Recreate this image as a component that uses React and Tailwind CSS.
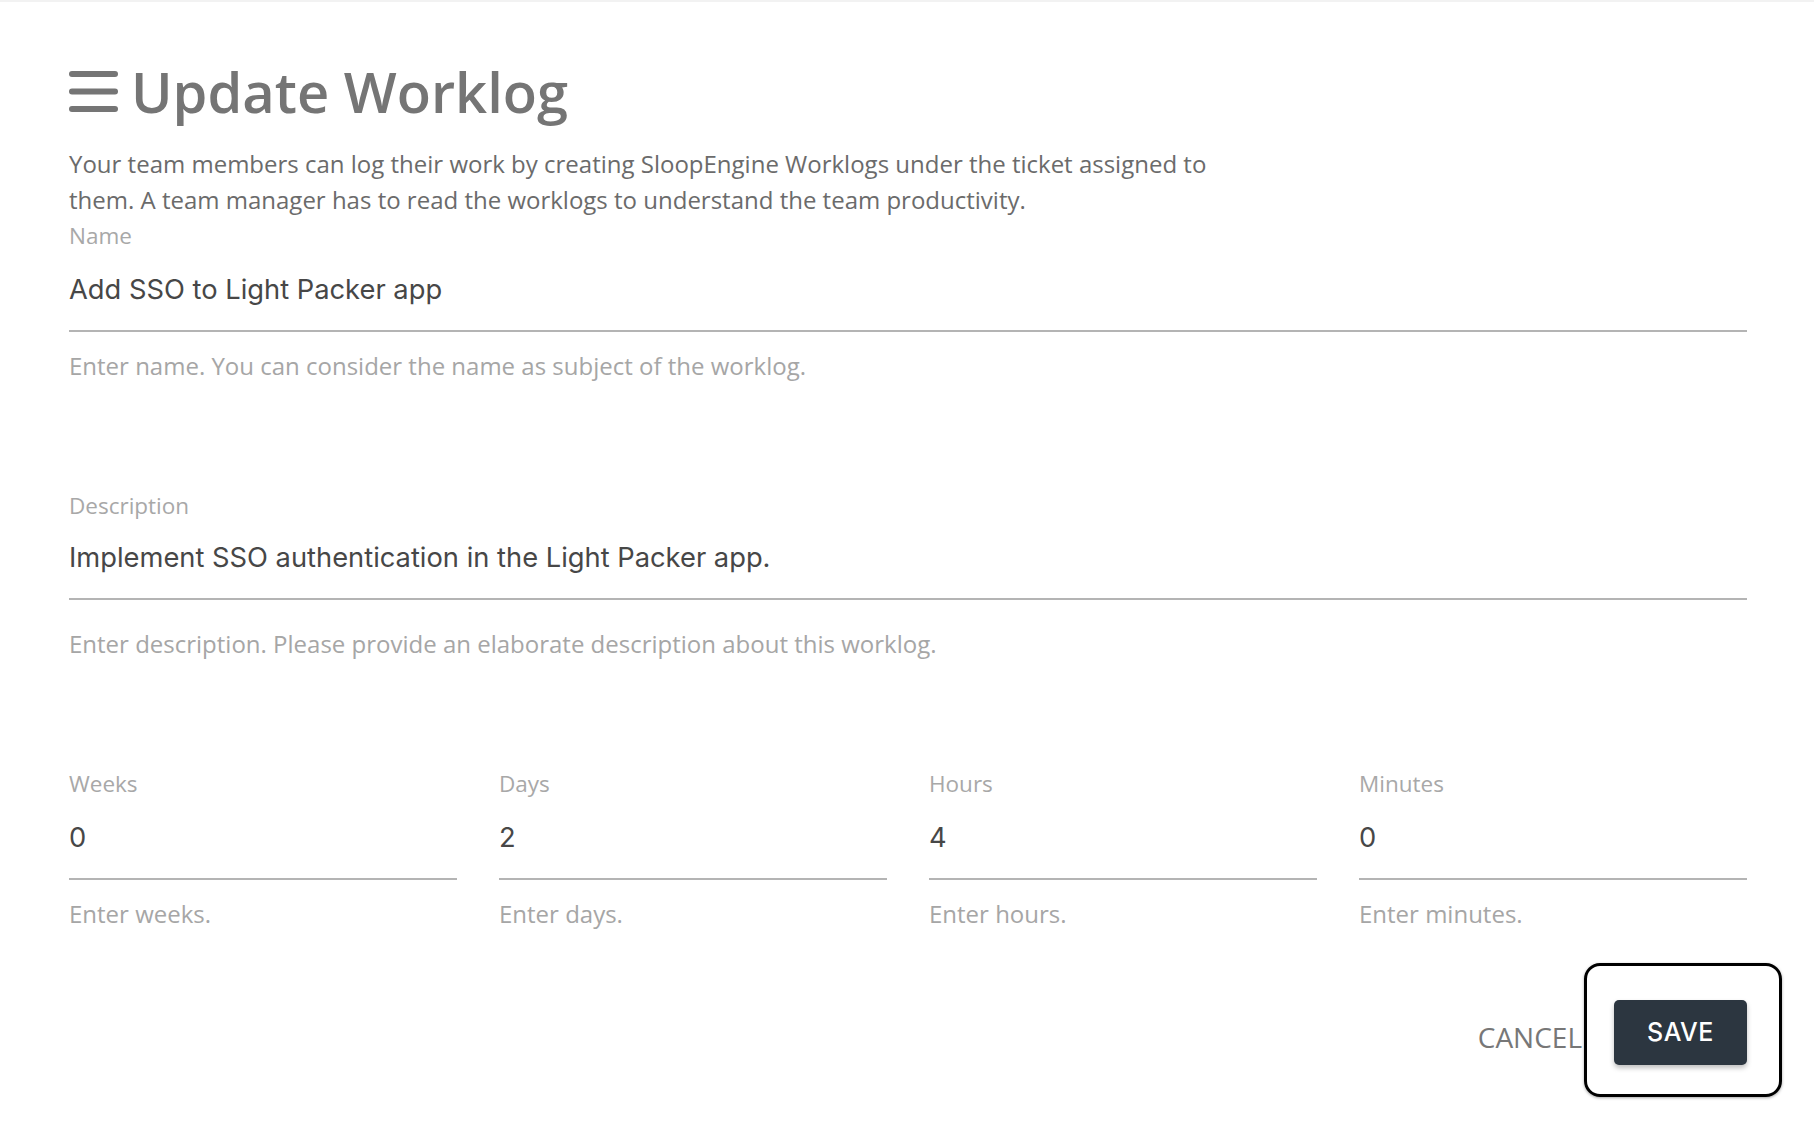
import React from "react";

const OPEN = { fontFamily: '"Open Sans", "Noto Sans", sans-serif' };
const SYS = { fontFamily: 'Inter, Roboto, "Liberation Sans", sans-serif' };

function Hamburger() {
  return (
    <svg width="49" height="41" viewBox="0 0 49 41" className="shrink-0">
      <rect x="0" y="0" width="49" height="6" rx="3" fill="#757575" />
      <rect x="0" y="17.5" width="49" height="6" rx="3" fill="#757575" />
      <rect x="0" y="35" width="49" height="6" rx="3" fill="#757575" />
    </svg>
  );
}

function Field({ label, value, helper, valueBox = "mt-[22px] pb-[21px]", helperMt = "mt-[19px]", className = "" }) {
  return (
    <div className={className}>
      <div className="text-[22.5px] leading-[28px] text-[#a8a8a8]">{label}</div>
      <div
        className={`${valueBox} border-b-2 border-[#b4b4b4] text-[27.3px] leading-[36px] text-[#474747]`}
        style={SYS}
      >
        {value}
      </div>
      <div className={`${helperMt} text-[24px] leading-[30px] text-[#a6a6a6]`}>{helper}</div>
    </div>
  );
}

export default function App() {
  return (
    <div className="min-h-screen bg-white border-t-2 border-[#f2f2f2] pl-[69px] pr-[67px]" style={OPEN}>
      <div className="pt-[55px] flex items-center gap-[13px]">
        <Hamburger />
        <h1 className="text-[56px] leading-[68px] font-semibold text-[#757575]">Update Worklog</h1>
      </div>
      <p className="mt-[21px] max-w-[1180px] text-[24px] leading-[36px] text-[#6b6b6b]">
        Your team members can log their work by creating SloopEngine Worklogs under the ticket assigned to them. A team manager has to read the worklogs to understand the team productivity.
      </p>
      <Field
        className="mt-[4px]"
        label="Name"
        value="Add SSO to Light Packer app"
        valueBox="mt-[22px] pb-[22px]"
        helper="Enter name. You can consider the name as subject of the worklog."
      />
      <Field
        className="mt-[111px]"
        label="Description"
        value="Implement SSO authentication in the Light Packer app."
        valueBox="mt-[20px] pb-[22px]"
        helper="Enter description. Please provide an elaborate description about this worklog."
        helperMt="mt-[29px]"
      />
      <div className="mt-[111px] grid grid-cols-4 gap-[42px]">
        <Field label="Weeks" value="0" helper="Enter weeks." valueBox="mt-[22px] pb-[22px]" />
        <Field label="Days" value="2" helper="Enter days." valueBox="mt-[22px] pb-[22px]" />
        <Field label="Hours" value="4" helper="Enter hours." valueBox="mt-[22px] pb-[22px]" />
        <Field label="Minutes" value="0" helper="Enter minutes." valueBox="mt-[22px] pb-[22px]" />
      </div>
      <div className="mt-[71px] flex justify-end items-center gap-[32px]">
        <button className="text-[28px] leading-[36px] text-[#777777] uppercase mt-[8px]">Cancel</button>
        <div className="relative">
          <div className="absolute -left-[30px] -right-[35px] -top-[37px] -bottom-[32px] rounded-[16px] border-[3px] border-black shadow-[0_1px_3px_rgba(0,0,0,0.35)] pointer-events-none" />
          <button
            className="relative w-[133px] h-[65px] rounded-[5px] bg-[#2c3640] text-white text-[25px] font-medium tracking-[0.02em] shadow-[0_3px_5px_rgba(0,0,0,0.25)]"
            style={SYS}
          >
            SAVE
          </button>
        </div>
      </div>
    </div>
  );
}
